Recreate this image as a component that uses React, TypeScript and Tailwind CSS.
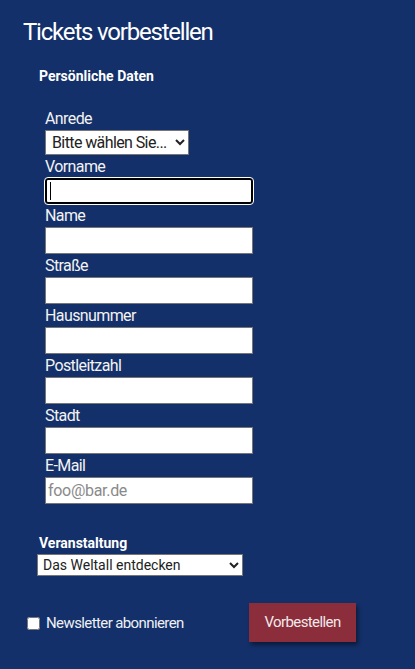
import React from 'react';

const fields = [
  { label: 'Vorname', focus: true },
  { label: 'Name' },
  { label: 'Straße' },
  { label: 'Hausnummer' },
  { label: 'Postleitzahl' },
  { label: 'Stadt' },
  { label: 'E-Mail', placeholder: 'foo@bar.de' },
];

export default function App() {
  return (
    <div
      className="min-h-[669px] w-full bg-[#13306a] text-white pt-[17px] pl-[23px]"
      style={{ fontFamily: 'Roboto, "Liberation Sans", sans-serif' }}
    >
      <h1 className="text-[24px] leading-[30px] font-normal tracking-[-1.2px]">Tickets vorbestellen</h1>

      <div className="pl-[16px] mt-[21px]">
        <h2 className="text-[14px] leading-[16px] font-bold">Persönliche Daten</h2>

        <div className="pl-[6px] mt-[25px] flex flex-col">
          <label className="text-[16px] leading-[20px] text-[#f3f3f3] tracking-[-0.6px]">Anrede</label>
          <select
            defaultValue=""
            className="mt-[1px] w-[144px] h-[25px] bg-white text-[#222] text-[16px] tracking-[-0.6px] border border-[#767676] px-[2px] outline-none"
          >
            <option value="">Bitte wählen Sie...</option>
            <option>Herr</option>
            <option>Frau</option>
          </select>

          {fields.map((f) => (
            <div key={f.label} className="flex flex-col mt-[2px]">
              <label className="text-[16px] leading-[20px] text-[#f3f3f3] tracking-[-0.6px]">{f.label}</label>
              {f.focus ? (
                <div className="mt-[1px] w-[208px] h-[26px] rounded-[3px] border-[2px] border-black bg-white outline outline-1 outline-white">
                  <div className="ml-[3px] mt-[2px] w-[1px] h-[18px] bg-black" />
                </div>
              ) : (
                <input
                  placeholder={f.placeholder}
                  className="mt-[1px] w-[208px] h-[27px] bg-white border border-[#767676] px-[2px] text-[16px] tracking-[-0.3px] text-[#222] placeholder:text-[#8a8a8a] outline-none"
                />
              )}
            </div>
          ))}
        </div>

        <h2 className="mt-[31px] text-[14px] leading-[16px] font-bold">Veranstaltung</h2>
        <select className="mt-[3px] -ml-[2px] w-[206px] h-[22px] bg-white text-[#222] text-[14px] border border-[#767676] px-[1px] outline-none">
          <option>Das Weltall entdecken</option>
        </select>
      </div>

      <div className="mt-[26px] flex items-center pl-[4px]">
        <label className="flex items-center gap-[6px] w-[222px] mt-[2px]">
          <input type="checkbox" className="w-[13px] h-[13px] m-0" />
          <span className="text-[15px] text-[#eef0f5] tracking-[-0.6px]">Newsletter abonnieren</span>
        </label>
        <button className="w-[107px] h-[39px] bg-[#8b2d3a] text-[15px] text-[#f1e9ea] tracking-[-0.6px] shadow-[2px_3px_4px_rgba(0,0,0,0.45)]">
          Vorbestellen
        </button>
      </div>
    </div>
  );
}
